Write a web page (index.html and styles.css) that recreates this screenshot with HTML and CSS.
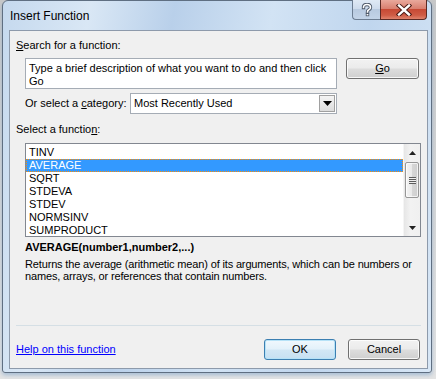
FILE: index.html
```html
<!DOCTYPE html>
<html>
<head>
<meta charset="utf-8">
<link rel="stylesheet" href="styles.css">
</head>
<body>
<div class="desktop">
  <div class="window">
    <div class="titlebar">
      <span class="title">Insert Function</span>
      <div class="caption-btns">
        <div class="cap help">
          <svg width="12" height="14" viewBox="0 0 12 14"><path d="M2.5 4.5 Q2.5 1.5 6 1.5 Q9.5 1.5 9.5 4.2 Q9.5 6 7.5 7 Q6.5 7.6 6.5 9" fill="none" stroke="#4a5566" stroke-width="3.4" stroke-linecap="square"/><rect x="4.8" y="10.2" width="3.4" height="3" fill="#4a5566"/><path d="M2.5 4.5 Q2.5 1.5 6 1.5 Q9.5 1.5 9.5 4.2 Q9.5 6 7.5 7 Q6.5 7.6 6.5 9" fill="none" stroke="#fff" stroke-width="1.6" stroke-linecap="square"/><rect x="5.6" y="11" width="1.8" height="1.4" fill="#fff"/></svg>
        </div>
        <div class="cap close">
          <svg width="16" height="12" viewBox="0 0 16 12"><path d="M3 1.5 L13 10.5 M13 1.5 L3 10.5" stroke="#4a1a14" stroke-width="4.4" stroke-linecap="square"/><path d="M3 1.5 L13 10.5 M13 1.5 L3 10.5" stroke="#fff" stroke-width="2.4" stroke-linecap="square"/></svg>
        </div>
      </div>
    </div>
    <div class="client">
      <div class="label l1"><u>S</u>earch for a function:</div>
      <div class="search-row">
        <div class="textbox">Type a brief description of what you want to do and then click Go</div>
        <div class="btn go"><u>G</u>o</div>
      </div>
      <div class="cat-row">
        <span class="cat-label">Or select a <u>c</u>ategory:</span>
        <div class="combo">
          <span class="combo-text">Most Recently Used</span>
          <div class="combo-arrow"><svg width="9" height="5" viewBox="0 0 9 5"><path d="M0 0 H9 L4.5 5 Z" fill="#000"/></svg></div>
        </div>
      </div>
      <div class="label l2">Select a functio<u>n</u>:</div>
      <div class="listbox">
        <ul class="items">
          <li>TINV</li>
          <li class="sel">AVERAGE</li>
          <li>SQRT</li>
          <li>STDEVA</li>
          <li>STDEV</li>
          <li>NORMSINV</li>
          <li>SUMPRODUCT</li>
        </ul>
        <div class="scrollbar">
          <div class="sb-arrow"><svg width="7" height="4" viewBox="0 0 7 4"><path d="M3.5 0 L7 4 H0 Z" fill="#222"/></svg></div>
          <div class="sb-track">
            <div class="sb-thumb"><div class="grip"></div></div>
          </div>
          <div class="sb-arrow"><svg width="7" height="4" viewBox="0 0 7 4"><path d="M0 0 H7 L3.5 4 Z" fill="#222"/></svg></div>
        </div>
      </div>
      <div class="syntax">AVERAGE(number1,number2,...)</div>
      <div class="desc">Returns the average (arithmetic mean) of its arguments, which can be numbers or names, arrays, or references that contain numbers.</div>
      <div class="sep"></div>
      <div class="footer">
        <a class="help-link" href="#">Help on this function</a>
        <div class="btn-group">
          <div class="btn ok">OK</div>
          <div class="btn cancel">Cancel</div>
        </div>
      </div>
    </div>
  </div>
</div>
</body>
</html>
```

FILE: styles.css
```css
html, body {
  margin: 0;
  padding: 0;
}
body {
  width: 436px;
  height: 379px;
  overflow: hidden;
  background: #d8d8d8;
  font-family: "Liberation Sans", Arial, sans-serif;
  font-size: 11px;
  color: #000;
}
.desktop {
  padding-left: 2px;
  height: 379px;
  background: linear-gradient(#c8c8c8, #e4e4e4);
}
.window {
  width: 428px;
  height: 371px;
  border: 1px solid #5f6f82;
  border-radius: 6px 6px 3px 3px;
  background: linear-gradient(100deg, #c5d9ee 0%, #d9e7f5 18%, #b9d0ea 35%, #d2e3f4 55%, #c0d6ee 75%, #d8e7f6 100%);
  box-shadow: 0 2px 4px rgba(120, 160, 200, 0.6);
  display: flex;
  flex-direction: column;
}
.titlebar {
  height: 29px;
  display: flex;
  align-items: flex-start;
  padding-left: 7px;
  padding-right: 4px;
}
.title {
  font-family: "Liberation Sans", Arial, sans-serif;
  font-size: 12px;
  margin-top: 8px;
  line-height: 14px;
  color: #000;
}
.caption-btns {
  margin-left: auto;
  display: flex;
  margin-top: -1px;
}
.cap {
  height: 20px;
  display: flex;
  align-items: center;
  justify-content: center;
  box-sizing: border-box;
}
.help {
  width: 28px;
  border: 1px solid #6c7d92;
  border-top: none;
  border-right: none;
  border-radius: 0 0 0 4px;
  background: linear-gradient(#dfe9f5 0%, #cfdced 45%, #b8cae0 50%, #c3d4e8 100%);
}
.close {
  width: 47px;
  border: 1px solid #5a2a24;
  border-top: none;
  border-radius: 0 0 4px 0;
  background: linear-gradient(#e9a99c 0%, #d98070 45%, #c74a35 50%, #cf5c45 80%, #e0836d 100%);
}
.client {
  margin-left: 6px;
  width: 417px;
  height: 337px;
  border: 1px solid #8d9aab;
  background: #f0f0f0;
  display: flex;
  flex-direction: column;
}
.label {
  line-height: 13px;
  margin-left: 6px;
}
.l1 {
  margin-top: 8px;
}
.search-row {
  display: flex;
  align-items: flex-start;
  margin-left: 15px;
  margin-top: 6px;
}
.textbox {
  width: 312px;
  height: 31px;
  box-sizing: border-box;
  border: 1px solid #a5acb5;
  background: #fff;
  padding: 3px 3px 0 3px;
  line-height: 13px;
}
.btn {
  box-sizing: border-box;
  height: 21px;
  border: 1px solid #707070;
  border-radius: 3px;
  background: linear-gradient(#f2f2f2 0%, #ebebeb 48%, #dddddd 52%, #cfcfcf 100%);
  box-shadow: inset 0 0 0 1px rgba(255, 255, 255, 0.8);
  display: flex;
  align-items: center;
  justify-content: center;
  line-height: 13px;
}
.go {
  width: 73px;
  margin-left: 9px;
}
.cat-row {
  display: flex;
  align-items: center;
  margin-left: 15px;
  margin-top: 4px;
}
.cat-label {
  width: 105px;
  line-height: 13px;
}
.combo {
  width: 207px;
  height: 21px;
  box-sizing: border-box;
  border: 1px solid #a5acb5;
  background: #fff;
  display: flex;
  align-items: center;
}
.combo-text {
  flex: 1;
  padding-left: 3px;
  line-height: 13px;
}
.combo-arrow {
  width: 16px;
  height: 17px;
  margin-right: 1px;
  box-sizing: border-box;
  border: 1px solid #a0a0a0;
  background: linear-gradient(#f4f4f4, #dcdcdc);
  display: flex;
  align-items: center;
  justify-content: center;
}
.l2 {
  margin-top: 9px;
}
.listbox {
  margin-left: 15px;
  margin-top: 7px;
  width: 396px;
  height: 94px;
  box-sizing: border-box;
  border: 1px solid #828790;
  background: #fff;
  display: flex;
}
.items {
  list-style: none;
  margin: 0;
  padding: 2px 0 0 0;
  flex: 1;
  overflow: hidden;
}
.items li {
  height: 13px;
  line-height: 13px;
  padding-left: 3px;
  white-space: nowrap;
}
.items li.sel {
  background: #3399ff;
  color: #fff;
  outline: 1px dotted #ff8c00;
  outline-offset: -1px;
}
.scrollbar {
  width: 17px;
  display: flex;
  flex-direction: column;
  background: linear-gradient(90deg, #e6e6e6, #f2f2f2 40%, #f0f0f0);
  border-left: 1px solid #f5f5f5;
  box-sizing: border-box;
}
.sb-arrow {
  height: 17px;
  display: flex;
  align-items: center;
  justify-content: center;
}
.sb-track {
  flex: 1;
  padding-top: 1px;
}
.sb-thumb {
  margin: 0 1px 0 1px;
  height: 36px;
  box-sizing: border-box;
  border: 1px solid #979797;
  border-radius: 2px;
  background: linear-gradient(90deg, #f4f4f4 0%, #e9e9e9 50%, #d6d6d6 51%, #cfcfcf 100%);
  box-shadow: inset 0 0 0 1px rgba(255, 255, 255, 0.7);
  display: flex;
  align-items: center;
  justify-content: center;
}
.grip {
  width: 7px;
  height: 7px;
  background: repeating-linear-gradient(#5c5c5c 0, #5c5c5c 1px, #eeeeee 1px, #eeeeee 2px);
}
.syntax {
  font-weight: bold;
  margin-left: 15px;
  margin-top: 4px;
  line-height: 13px;
}
.desc {
  margin-left: 15px;
  margin-right: 2px;
  margin-top: 4px;
  line-height: 12px;
  letter-spacing: -0.15px;
}
.sep {
  margin-left: 6px;
  margin-top: auto;
  width: 405px;
  height: 1px;
  background: #d5dfe5;
}
.footer {
  display: flex;
  align-items: center;
  margin: 13px 0 8px 6px;
}
.help-link {
  color: #0000ff;
  text-decoration: underline;
  line-height: 13px;
}
.btn-group {
  margin-left: auto;
  margin-right: 7px;
  display: flex;
  gap: 12px;
}
.ok, .cancel {
  width: 72px;
}
.ok {
  border-color: #3c7fb1;
  box-shadow: inset 0 0 0 1px #b6e2f7;
  background: linear-gradient(#f0f8fd 0%, #e3f1fa 48%, #d2e7f5 52%, #c6e0f2 100%);
}
```
